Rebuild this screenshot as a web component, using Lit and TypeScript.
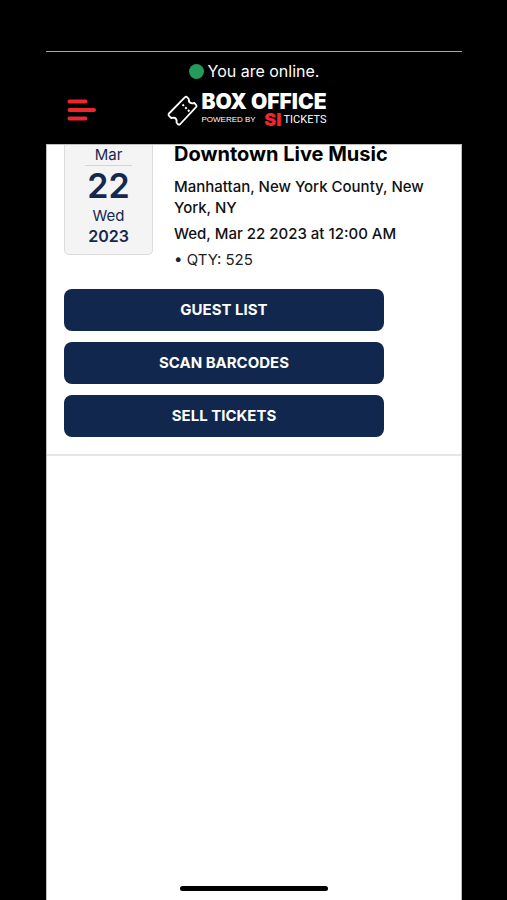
import { LitElement, html, css, svg } from "lit";
import { customElement, property } from "lit/decorators.js";

const ticketIcon = svg`
  <path d="M2 19.500 L17.800 3.300 Q19 2 20.200 3.300 L21.800 5 Q21.300 8.800 25 9.400 L27.500 9 L29 10.800 Q30 12 29 13.200 L13.300 30 Q12 31.300 10.700 30 L9.500 28.500 Q10.300 24.500 7 23.600 L4.300 24 L2.300 22.200 Q1 20.800 2 19.500 Z"
    fill="none" stroke="#fff" stroke-width="1.800" stroke-linejoin="round" />
  <path d="M15.500 10.500 L22.500 17.500" fill="none" stroke="#fff" stroke-width="2" stroke-dasharray="2 1.900" />`;

@customElement("app-header")
export class AppHeader extends LitElement {
  static styles = css`
    :host {
      display: block;
      border-top: 1px solid #a8a8a8;
      background: #000;
      color: #fff;
    }
    .status {
      display: flex;
      align-items: center;
      justify-content: center;
      gap: 4px;
      margin: 0;
      padding-top: 8px;
      font-size: 16px;
      line-height: 22px;
      font-weight: 400;
    }
    .dot {
      width: 15px;
      height: 15px;
      border-radius: 50%;
      background: #259a5b;
    }
    .bar {
      display: grid;
      grid-template-columns: 1fr auto 1fr;
      align-items: center;
      padding: 10px 20px 16px;
    }
    .menu {
      justify-self: start;
      display: flex;
      padding: 0;
      border: 0;
      background: none;
    }
    .brand {
      display: flex;
      align-items: center;
      gap: 3px;
      margin-right: 14px;
      color: #fff;
      text-decoration: none;
    }
    .words {
      display: flex;
      flex-direction: column;
      gap: 1px;
    }
    .name {
      font: 900 21px/18px Inter, sans-serif;
      white-space: nowrap;
    }
    .sub {
      display: flex;
      align-items: center;
      justify-content: space-between;
      white-space: nowrap;
    }
    .powered {
      font: 8px/16px "Liberation Sans", sans-serif;
    }
    .partner {
      display: flex;
      gap: 2px;
    }
    .si {
      color: #f0262d;
      font: 900 18px/16px Inter, sans-serif;
    }
    .tickets {
      font: 400 11px/16px Roboto, sans-serif;
    }
  `;

  render() {
    return html`
      <p class="status" role="status"><span class="dot"></span>You are online.</p>
      <div class="bar">
        <button class="menu" type="button" aria-label="Menu">
          <svg width="31" height="24" viewBox="0 0 31 24" aria-hidden="true">
            <path d="M3.500 3.500 H19.500 M3.500 12 H28 M3.500 20.500 H19.500"
              stroke="#ee272c" stroke-width="4" stroke-linecap="round" />
          </svg>
        </button>
        <a class="brand" href="#">
          <svg width="31" height="36" viewBox="0 -2 31 36" aria-hidden="true">${ticketIcon}</svg>
          <span class="words">
            <span class="name">BOX OFFICE</span>
            <span class="sub">
              <span class="powered">POWERED BY</span>
              <span class="partner"><span class="si">SI</span><span class="tickets">TICKETS</span></span>
            </span>
          </span>
        </a>
      </div>
    `;
  }
}

@customElement("event-card")
export class EventCard extends LitElement {
  @property() name = "";
  @property() place = "";
  @property() when = "";
  @property({ type: Number }) quantity = 0;

  static styles = css`
    :host {
      display: block;
      padding: 0 17px 17px;
      border-bottom: 2px solid #e6e6e6;
    }
    .summary {
      display: flex;
      align-items: flex-start;
      gap: 21px;
    }
    .date {
      box-sizing: border-box;
      flex: none;
      display: flex;
      flex-direction: column;
      align-items: center;
      width: 89px;
      padding-bottom: 8px;
      border: 1px solid #dcdcde;
      border-top: 0;
      border-radius: 0 0 5px 5px;
      background: #f4f4f5;
      color: #14284f;
      font-size: 15px;
      line-height: 20px;
    }
    .month {
      width: 47px;
      border-bottom: 1px solid #d4d4d6;
      text-align: center;
    }
    .day {
      font-size: 34px;
      line-height: 40px;
      font-weight: 600;
    }
    .year {
      font-size: 16px;
      font-weight: 600;
    }
    .info {
      display: flex;
      flex-direction: column;
      gap: 5px;
      min-width: 0;
      font-size: 15px;
      line-height: 21px;
      font-weight: 500;
    }
    h1,
    p {
      margin: 0;
    }
    h1 {
      margin-bottom: 8px;
      font-size: 20px;
      line-height: 18px;
      font-weight: 700;
      color: #000;
    }
    .qty {
      font-weight: 400;
      color: #222;
    }
    .actions {
      display: flex;
      flex-direction: column;
      gap: 11px;
      margin: 19px 60px 0 0;
    }
    .actions button {
      height: 42px;
      border: 0;
      border-radius: 8px;
      background: #12274d;
      color: #fff;
      font: 700 15px/20px Inter, sans-serif;
    }
  `;

  render() {
    return html`
      <div class="summary">
        <div class="date">
          <span class="month">Mar</span>
          <span class="day">22</span>
          <span>Wed</span>
          <span class="year">2023</span>
        </div>
        <div class="info">
          <h1>${this.name}</h1>
          <p>${this.place}</p>
          <p>${this.when}</p>
          <p class="qty">• QTY: ${this.quantity}</p>
        </div>
      </div>
      <div class="actions">
        <button type="button">GUEST LIST</button>
        <button type="button">SCAN BARCODES</button>
        <button type="button">SELL TICKETS</button>
      </div>
    `;
  }
}

@customElement("app-root")
export class AppRoot extends LitElement {
  static styles = css`
    :host {
      position: relative;
      box-sizing: border-box;
      display: flex;
      flex-direction: column;
      min-height: 100vh;
      padding: 51px 45px 0 46px;
      background: #000;
      color: #111;
      font-family: Inter, sans-serif;
    }
    main {
      flex: 1;
      border: 1px solid #bdbdbd;
      border-width: 1px 1px 0;
      background: #fff;
    }
    .home {
      position: absolute;
      bottom: 9px;
      left: 50%;
      width: 148px;
      height: 5px;
      margin-left: -74px;
      border-radius: 3px;
      background: #000;
    }
  `;

  render() {
    return html`
      <app-header></app-header>
      <main>
        <event-card
          name="Downtown Live Music"
          place="Manhattan, New York County, New York, NY"
          when="Wed, Mar 22 2023 at 12:00 AM"
          .quantity=${525}
        ></event-card>
      </main>
      <div class="home"></div>
    `;
  }
}
